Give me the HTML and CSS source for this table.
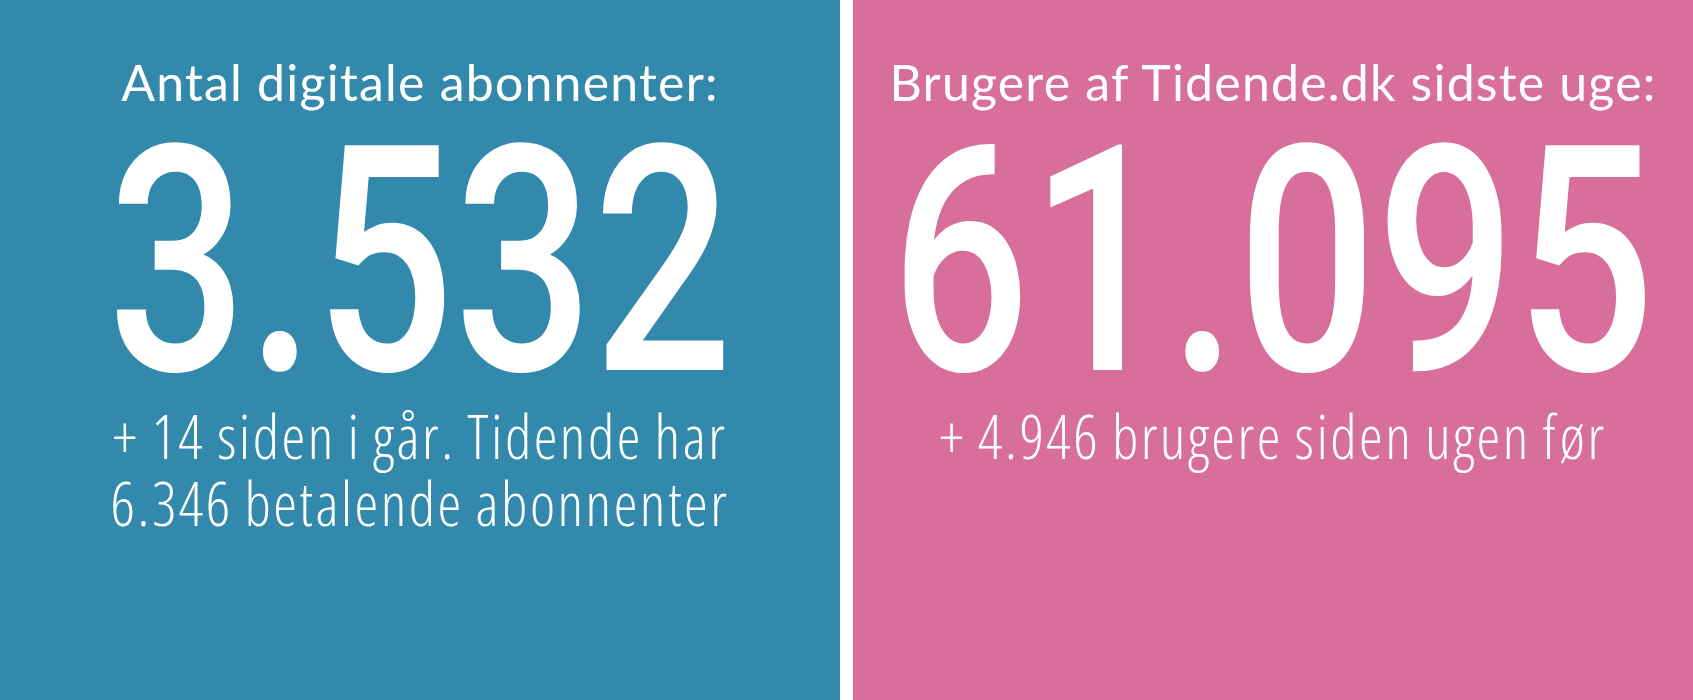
FILE: index.html
```html
<!DOCTYPE html>
<html lang="da">
<head>
<meta charset="utf-8">
<title>Tidende tal</title>
<link rel="stylesheet" href="styles.css">
</head>
<body>
<main class="board">
  <section class="panel panel-blue">
    <h2 class="label">Antal digitale abonnenter:</h2>
    <div class="figure">3.532</div>
    <p class="note">+ 14 siden i går. Tidende har<br>6.346 betalende abonnenter</p>
  </section>
  <section class="panel panel-pink">
    <h2 class="label">Brugere af Tidende.dk sidste uge:</h2>
    <div class="figure">61.095</div>
    <p class="note">+ 4.946 brugere siden ugen før</p>
  </section>
</main>
</body>
</html>
```
FILE: styles.css
```css
html, body {
  margin: 0;
  padding: 0;
  background: #ffffff;
}
.board {
  display: flex;
  gap: 13px;
  width: 1693px;
  height: 700px;
  overflow: hidden;
}
.panel {
  flex: 1 1 0;
  min-width: 0;
  overflow: hidden;
  display: flex;
  flex-direction: column;
  align-items: center;
  padding-top: 52px;
  color: #ffffff;
  box-sizing: border-box;
}
.panel-blue {
  flex: 0 0 840px;
  background: #3289ac;
}
.panel-pink {
  background: #d86f9b;
}
.label {
  margin: 0;
  font-family: Lato, "Open Sans", sans-serif;
  font-weight: 400;
  font-size: 50px;
  line-height: 60px;
  letter-spacing: 1.2px;
  white-space: nowrap;
}
.figure {
  margin-top: 30px;
  font-family: Roboto, "Liberation Sans", sans-serif;
  font-weight: 500;
  font-size: 316px;
  line-height: 240px;
  white-space: nowrap;
  transform: scaleX(0.775);
}
.note {
  margin: 21px 0 0;
  font-family: "Open Sans", sans-serif;
  font-size: 60px;
  line-height: 67px;
  font-weight: 300;
  font-stretch: condensed;
  letter-spacing: 2.5px;
  word-spacing: -2px;
  text-align: center;
  white-space: nowrap;
}
```
